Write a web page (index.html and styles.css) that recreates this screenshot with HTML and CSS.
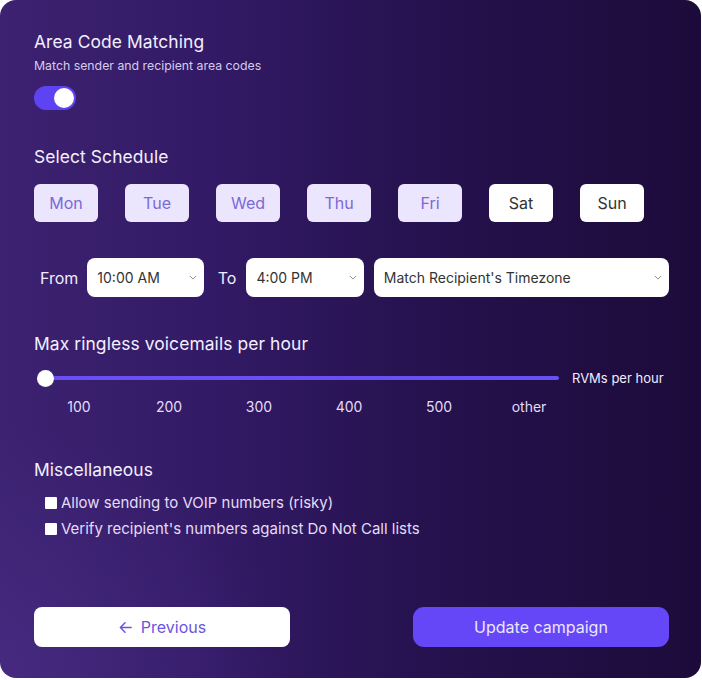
FILE: index.html
```html
<!DOCTYPE html>
<html>
<head>
<meta charset="utf-8">
<link rel="stylesheet" href="styles.css">
</head>
<body>
<div class="card">
  <section class="block">
    <h2 class="title">Area Code Matching</h2>
    <p class="sub">Match sender and recipient area codes</p>
    <div class="toggle"><span class="knob"></span></div>
  </section>

  <section class="block schedule">
    <h2 class="title">Select Schedule</h2>
    <div class="days">
      <button class="day on">Mon</button>
      <button class="day on">Tue</button>
      <button class="day on">Wed</button>
      <button class="day on">Thu</button>
      <button class="day on">Fri</button>
      <button class="day">Sat</button>
      <button class="day">Sun</button>
    </div>
    <div class="timerow">
      <span class="lbl from">From</span>
      <div class="select s1"><span>10:00 AM</span><svg class="chev" viewBox="0 0 10 6" width="8" height="5"><path d="M1 1l4 4 4-4" fill="none" stroke="#888" stroke-width="1.2"/></svg></div>
      <span class="lbl to">To</span>
      <div class="select s2"><span>4:00 PM</span><svg class="chev" viewBox="0 0 10 6" width="8" height="5"><path d="M1 1l4 4 4-4" fill="none" stroke="#888" stroke-width="1.2"/></svg></div>
      <div class="select s3"><span>Match Recipient's Timezone</span><svg class="chev" viewBox="0 0 10 6" width="8" height="5"><path d="M1 1l4 4 4-4" fill="none" stroke="#888" stroke-width="1.2"/></svg></div>
    </div>
  </section>

  <section class="block rate">
    <h2 class="title">Max ringless voicemails per hour</h2>
    <div class="sliderrow">
      <div class="track"><span class="thumb"></span></div>
      <span class="unit">RVMs per hour</span>
    </div>
    <div class="ticks">
      <span>100</span><span>200</span><span>300</span><span>400</span><span>500</span><span>other</span>
    </div>
  </section>

  <section class="block misc">
    <h2 class="title">Miscellaneous</h2>
    <label class="check"><span class="box"></span>Allow sending to VOIP numbers (risky)</label>
    <label class="check"><span class="box"></span>Verify recipient's numbers against Do Not Call lists</label>
  </section>

  <div class="actions">
    <button class="btn prev"><svg viewBox="0 0 16 16" width="15" height="15"><path d="M14 8H2.5M7.5 3L2.5 8l5 5" fill="none" stroke="#6a55e0" stroke-width="1.6" stroke-linecap="round" stroke-linejoin="round"/></svg>Previous</button>
    <button class="btn update">Update campaign</button>
  </div>
</div>
</body>
</html>
```
FILE: styles.css
```css
* { box-sizing: border-box; }
html, body { margin: 0; padding: 0; background: #ffffff; }
body { font-family: Inter, "Noto Sans", sans-serif; }

.card {
  width: 701px;
  height: 678px;
  border-radius: 16px;
  padding: 30px 32px 0 34px;
  color: #f1ecff;
  background:
    radial-gradient(ellipse 55% 50% at 0% 100%, rgba(78, 48, 140, 0.55), rgba(78, 48, 140, 0) 75%),
    linear-gradient(90deg, #3c2270 0%, #331a66 30%, #26124f 60%, #1c0b3a 100%);
  display: flex;
  flex-direction: column;
}

.title {
  margin: 0;
  font-size: 17.4px;
  font-weight: 400;
  line-height: 24px;
  color: #f3efff;
  letter-spacing: 0.1px;
}
.sub {
  margin: 4px 0 0;
  font-size: 12.3px;
  line-height: 16px;
  color: #d6cbee;
}
.toggle {
  margin-top: 12px;
  width: 42px;
  height: 24px;
  border-radius: 12px;
  background: #5e43f3;
  display: flex;
  align-items: center;
  justify-content: flex-end;
  padding: 0 2px;
}
.knob {
  width: 20px;
  height: 20px;
  border-radius: 50%;
  background: #ffffff;
}

.schedule { margin-top: 35px; }
.days {
  margin-top: 15px;
  display: flex;
  gap: 27px;
}
.day {
  width: 64px;
  height: 38px;
  border: 0;
  border-radius: 6px;
  background: #ffffff;
  color: #333333;
  font-family: inherit;
  font-size: 16px;
  padding: 0;
}
.day.on {
  background: #ebe5fd;
  color: #7a69d6;
}

.timerow {
  margin-top: 36px;
  display: flex;
  align-items: center;
  height: 39px;
}
.lbl { font-size: 16px; color: #f1ecff; }
.from { margin-left: 6px; margin-right: 9px; }
.to { margin-left: 14px; margin-right: 10px; }
.select {
  height: 39px;
  background: #ffffff;
  border-radius: 8px;
  display: flex;
  align-items: center;
  justify-content: space-between;
  padding: 0 7px 0 10px;
  font-size: 14px;
  color: #333333;
}
.s1 { width: 117px; }
.s2 { width: 118px; }
.s3 { width: 297px; margin-left: 10px; }
.chev { flex: none; }

.rate { margin-top: 35px; }
.sliderrow {
  margin-top: 12px;
  display: flex;
  align-items: center;
  height: 20px;
}
.track {
  margin-left: 3px;
  width: 522px;
  height: 4px;
  border-radius: 2px;
  background: #6a4ff5;
  display: flex;
  align-items: center;
}
.thumb {
  width: 17px;
  height: 17px;
  border-radius: 50%;
  background: #ffffff;
}
.unit {
  margin-left: 13px;
  font-size: 13px;
  color: #f1ecff;
}
.ticks {
  margin-top: 10px;
  display: flex;
}
.ticks span {
  width: 90px;
  text-align: center;
  font-size: 14px;
  color: #e4dcf7;
}

.misc { margin-top: 43px; }
.misc .title { margin-bottom: 11px; }
.check {
  display: flex;
  align-items: center;
  margin-left: 11px;
  font-size: 15px;
  color: #e4dcf7;
  line-height: 20px;
}
.check + .check { margin-top: 6px; }
.box {
  width: 12px;
  height: 12px;
  background: #ffffff;
  border-radius: 1px;
  margin-right: 4px;
}

.actions {
  margin-top: auto;
  margin-bottom: 31px;
  display: flex;
  justify-content: space-between;
}
.btn {
  width: 256px;
  height: 40px;
  border: 0;
  font-family: inherit;
  font-size: 16px;
  display: flex;
  align-items: center;
  justify-content: center;
  gap: 8px;
}
.prev {
  background: #ffffff;
  color: #6a55e0;
  border-radius: 8px;
}
.update {
  background: #6547f8;
  color: #ece6ff;
  border-radius: 11px;
}
```
